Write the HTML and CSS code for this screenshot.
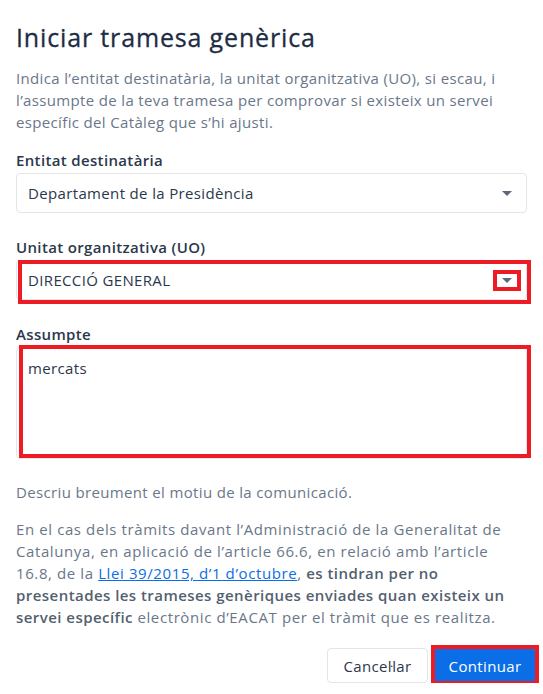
FILE: index.html
```html
<!DOCTYPE html>
<html lang="ca">
<head>
    <meta charset="UTF-8">
    <meta name="viewport" content="width=device-width, initial-scale=1.0">
    <title>Iniciar tramesa genèrica</title>
    <link rel="stylesheet" href="styles.css">
</head>
<body>
    <div class="dialog">
        <h1>Iniciar tramesa genèrica</h1>
        <p class="intro">Indica l’entitat destinatària, la unitat organitzativa (UO), si escau, i l’assumpte de la teva tramesa per comprovar si existeix un servei específic del Catàleg que s’hi ajusti.</p>

        <div class="field">
            <label class="label">Entitat destinatària</label>
            <div class="control">
                <div class="select">
                    <span>Departament de la Presidència</span>
                    <span class="caret"></span>
                </div>
            </div>
        </div>

        <div class="field">
            <label class="label">Unitat organitzativa (UO)</label>
            <div class="control">
                <div class="select">
                    <span>DIRECCIÓ GENERAL</span>
                    <span class="caret"></span>
                </div>
                <span class="mark mark-uo"></span>
                <span class="mark mark-caret"></span>
            </div>
        </div>

        <div class="field">
            <label class="label">Assumpte</label>
            <div class="control">
                <div class="textarea">mercats</div>
                <span class="mark mark-text"></span>
            </div>
        </div>

        <p class="help">Descriu breument el motiu de la comunicació.</p>

        <p class="note">En el cas dels tràmits davant l’Administració de la Generalitat de Catalunya, en aplicació de l’article 66.6, en relació amb l’article 16.8, de la <a href="#">Llei 39/2015, d’1 d’octubre</a>, <strong>es tindran per no presentades les trameses genèriques enviades quan existeix un servei específic</strong> electrònic d’EACAT per el tràmit que es realitza.</p>

        <div class="actions">
            <button class="btn btn-secondary">Cancel·lar</button>
            <div class="control">
                <button class="btn btn-primary">Continuar</button>
                <span class="mark mark-btn"></span>
            </div>
        </div>
    </div>
</body>
</html>
```

FILE: styles.css
```css
body {
    margin: 0;
    padding: 0;
    background-color: #ffffff;
    font-family: "Open Sans", Arial, sans-serif;
    letter-spacing: 0.35px;
    color: #6a778a;
}

.dialog {
    padding: 0 16px;
}

h1 {
    margin: 21px 0 0;
    font-size: 25px;
    line-height: 32px;
    font-weight: 500;
    color: #1e2c44;
    letter-spacing: 0.85px;
    -webkit-text-stroke: 0.3px #1e2c44;
}

.intro {
    margin: 14px 0 0;
    font-size: 15px;
    line-height: 22px;
}

.field {
    margin-top: 16px;
}

.field + .field {
    margin-top: 23px;
}

.label {
    display: block;
    margin-bottom: 2px;
    font-size: 15px;
    line-height: 22px;
    font-weight: 600;
    color: #2b374b;
}

.control {
    position: relative;
}

.select {
    height: 40px;
    box-sizing: border-box;
    border: 1px solid #e3e5e8;
    border-radius: 4px;
    padding: 0 14px 0 11px;
    display: flex;
    align-items: center;
    justify-content: space-between;
    font-size: 15px;
    color: #2b374b;
}

.caret {
    width: 0;
    height: 0;
    border-left: 5px solid transparent;
    border-right: 5px solid transparent;
    border-top: 5px solid #5d6979;
}

.textarea {
    height: 112px;
    box-sizing: border-box;
    border: 1px solid #e3e5e8;
    border-radius: 4px;
    padding: 9px 11px;
    font-size: 15px;
    line-height: 22px;
    color: #2b374b;
}

.mark {
    position: absolute;
    border: 4px solid #ed1c24;
}

.mark-uo {
    left: 2px;
    top: 0;
    right: -4px;
    bottom: -4px;
}

.mark-caret {
    right: 6px;
    top: 10px;
    width: 20px;
    height: 13px;
}

.mark-text {
    left: 3px;
    top: -2px;
    right: -4px;
    bottom: 1px;
}

.help {
    margin: 22px 0 0;
    font-size: 15px;
    line-height: 22px;
}

.note {
    margin: 15px 0 0;
    font-size: 15px;
    line-height: 22px;
    letter-spacing: 0.6px;
}

.note a {
    color: #0b6ee6;
}

.note strong {
    font-weight: 600;
    letter-spacing: 0.45px;
    color: #535f70;
}

.actions {
    margin: 20px -9px 0 0;
    display: flex;
    justify-content: flex-end;
    gap: 6px;
}

.btn {
    height: 35px;
    border-radius: 4px;
    font-family: "Open Sans", Arial, sans-serif;
    font-size: 15px;
    letter-spacing: 0.35px;
    padding: 0 10px;
}

.btn-secondary {
    background-color: #ffffff;
    border: 1px solid #e3e5e8;
    color: #2b374b;
    width: 101px;
}

.btn-primary {
    background-color: #0b6ee6;
    border: 1px solid #0b6ee6;
    color: #ffffff;
    font-weight: 500;
    width: 102px;
    display: block;
}

.mark-btn {
    left: -3px;
    top: -3px;
    right: -3px;
    bottom: -2px;
}
```
